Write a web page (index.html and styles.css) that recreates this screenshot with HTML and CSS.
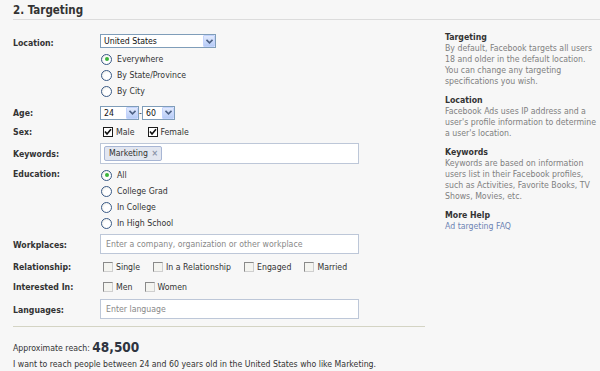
FILE: index.html
```html
<!DOCTYPE html>
<html lang="en">
<head>
    <meta charset="UTF-8">
    <title>Targeting</title>
    <link rel="stylesheet" href="styles.css">
</head>
<body>
    <div class="section">
        <h2 class="section-title">2. Targeting</h2>

        <div class="section-body">
            <div class="form">
                <div class="row row-location">
                    <div class="label">Location:</div>
                    <div class="field">
                        <div class="select select-country">
                            <span class="select-value">United States</span>
                            <span class="select-arrow"><svg width="7" height="5" viewBox="0 0 7 5"><path d="M0.5 0.8 L3.5 3.8 L6.5 0.8" fill="none" stroke="#4d6185" stroke-width="1.6"/></svg></span>
                        </div>
                        <div class="option"><span class="radio checked"></span>Everywhere</div>
                        <div class="option"><span class="radio"></span>By State/Province</div>
                        <div class="option"><span class="radio"></span>By City</div>
                    </div>
                </div>

                <div class="row row-age">
                    <div class="label">Age:</div>
                    <div class="field inline">
                        <div class="select select-age">
                            <span class="select-value">24</span>
                            <span class="select-arrow"><svg width="7" height="5" viewBox="0 0 7 5"><path d="M0.5 0.8 L3.5 3.8 L6.5 0.8" fill="none" stroke="#4d6185" stroke-width="1.6"/></svg></span>
                        </div>
                        <span class="dash">-</span>
                        <div class="select select-age">
                            <span class="select-value">60</span>
                            <span class="select-arrow"><svg width="7" height="5" viewBox="0 0 7 5"><path d="M0.5 0.8 L3.5 3.8 L6.5 0.8" fill="none" stroke="#4d6185" stroke-width="1.6"/></svg></span>
                        </div>
                    </div>
                </div>

                <div class="row row-sex">
                    <div class="label">Sex:</div>
                    <div class="field inline checks">
                        <span class="check-item"><span class="checkbox checked"><svg width="8" height="8" viewBox="0 0 8 8"><path d="M1 3.6 L3 6 L7 1.2" fill="none" stroke="#111" stroke-width="1.6"/></svg></span>Male</span>
                        <span class="check-item"><span class="checkbox checked"><svg width="8" height="8" viewBox="0 0 8 8"><path d="M1 3.6 L3 6 L7 1.2" fill="none" stroke="#111" stroke-width="1.6"/></svg></span>Female</span>
                    </div>
                </div>

                <div class="row row-keywords">
                    <div class="label">Keywords:</div>
                    <div class="field">
                        <div class="text-input token-input">
                            <span class="token">Marketing <span class="token-x">×</span></span>
                        </div>
                    </div>
                </div>

                <div class="row row-education">
                    <div class="label">Education:</div>
                    <div class="field">
                        <div class="option"><span class="radio checked"></span>All</div>
                        <div class="option"><span class="radio"></span>College Grad</div>
                        <div class="option"><span class="radio"></span>In College</div>
                        <div class="option"><span class="radio"></span>In High School</div>
                    </div>
                </div>

                <div class="row row-workplaces">
                    <div class="label">Workplaces:</div>
                    <div class="field">
                        <div class="text-input placeholder">Enter a company, organization or other workplace</div>
                    </div>
                </div>

                <div class="row row-relationship">
                    <div class="label">Relationship:</div>
                    <div class="field inline checks">
                        <span class="check-item"><span class="checkbox"></span>Single</span>
                        <span class="check-item"><span class="checkbox"></span>In a Relationship</span>
                        <span class="check-item"><span class="checkbox"></span>Engaged</span>
                        <span class="check-item"><span class="checkbox"></span>Married</span>
                    </div>
                </div>

                <div class="row row-interested">
                    <div class="label">Interested In:</div>
                    <div class="field inline checks">
                        <span class="check-item"><span class="checkbox"></span>Men</span>
                        <span class="check-item"><span class="checkbox"></span>Women</span>
                    </div>
                </div>

                <div class="row row-languages">
                    <div class="label">Languages:</div>
                    <div class="field">
                        <div class="text-input placeholder">Enter language</div>
                    </div>
                </div>

                <div class="reach">
                    <div class="reach-count">Approximate reach: <strong>48,500</strong></div>
                    <div class="reach-summary">I want to reach people between 24 and 60 years old in the United States who like Marketing.</div>
                </div>
            </div>

            <div class="help">
                <div class="help-block">
                    <h3>Targeting</h3>
                    <p>By default, Facebook targets all users<br>18 and older in the default location.<br>You can change any targeting<br>specifications you wish.</p>
                </div>
                <div class="help-block">
                    <h3>Location</h3>
                    <p>Facebook Ads uses IP address and a<br>user's profile information to determine<br>a user's location.</p>
                </div>
                <div class="help-block">
                    <h3>Keywords</h3>
                    <p>Keywords are based on information<br>users list in their Facebook profiles,<br>such as Activities, Favorite Books, TV<br>Shows, Movies, etc.</p>
                </div>
                <div class="help-block">
                    <h3>More Help</h3>
                    <p><a href="#">Ad targeting FAQ</a></p>
                </div>
            </div>
        </div>
    </div>
</body>
</html>
```

FILE: styles.css
```css
* {
    margin: 0;
    padding: 0;
    box-sizing: border-box;
}

body {
    background-color: #f7f7f7;
    color: #333;
    font-family: 'DejaVu Sans Condensed', 'Liberation Sans', sans-serif;
    font-size: 8.7px;
    width: 600px;
    height: 371px;
    overflow: hidden;
}

.section {
    padding-left: 13px;
}

.section-title {
    font-size: 11.5px;
    font-weight: bold;
    color: #333;
    height: 20px;
    line-height: 15px;
    padding-top: 3px;
    border-bottom: 1px solid #dcdcdc;
}

.section-body {
    display: flex;
}

/* left column: the form */

.form {
    width: 412px;
    padding-top: 14px;
}

.row {
    display: grid;
    grid-template-columns: 87px 1fr;
}

.label {
    font-weight: bold;
    color: #333;
    line-height: 14px;
}

.row-location .label { padding-top: 2px; }
.row-age { margin-top: 6px; }
.row-age .label { padding-top: 1px; }
.row-sex { margin-top: 4px; }
.row-keywords { margin-top: 3px; }
.row-keywords .label { padding-top: 4px; }
.row-education { margin-top: 3px; }
.row-workplaces { margin-top: 3px; }
.row-workplaces .label { padding-top: 4px; }
.row-relationship { margin-top: 5px; }
.row-interested { margin-top: 4px; }
.row-languages { margin-top: 4px; }
.row-languages .label { padding-top: 4px; }

.inline {
    display: flex;
    align-items: center;
}

.row-sex .label,
.row-relationship .label,
.row-interested .label {
    line-height: 16px;
}

/* selects */

.select {
    display: flex;
    align-items: center;
    height: 14px;
    background: #fff;
    border: 1px solid #7f9db9;
}

.select-country { width: 116px; }
.select-age { width: 39px; }
.select-age:last-child { width: 33px; }

.select-value {
    flex: 1;
    padding-left: 3px;
    line-height: 12px;
    color: #111;
}

.select-arrow {
    width: 12px;
    height: 12px;
    display: flex;
    align-items: center;
    justify-content: center;
    background: linear-gradient(to bottom, #e2eafd, #b6cbf6);
    border: 1px solid #c3d3fd;
    border-radius: 1px;
}

.dash {
    width: 3px;
    text-align: center;
    color: #333;
}

/* radios and checkboxes */

.option {
    display: flex;
    align-items: center;
    height: 16px;
}

.row-location .select + .option { margin-top: 3px; }

.radio {
    width: 11px;
    height: 11px;
    border-radius: 50%;
    border: 1px solid #3a5a86;
    background: radial-gradient(circle at 60% 60%, #fff 40%, #e4e4dc 100%);
    margin: 0 5px 0 1px;
    display: flex;
    align-items: center;
    justify-content: center;
}

.radio.checked::after {
    content: "";
    width: 4px;
    height: 4px;
    border-radius: 50%;
    background: #3cb43c;
}

.checks {
    height: 16px;
}

.check-item {
    display: flex;
    align-items: center;
    margin-right: 10px;
}

.row-interested .check-item { margin-right: 9px; }

.checkbox {
    width: 10px;
    height: 10px;
    margin: 0 3px 0 3px;
    background: #f4f4f0;
    border: 1px solid #8a8a8a;
    border-right-color: #cfcfcf;
    border-bottom-color: #cfcfcf;
    display: flex;
    align-items: center;
    justify-content: center;
}

.checkbox.checked {
    background: #fff;
    border: 1px solid #1c1c1c;
}

/* text inputs */

.text-input {
    width: 259px;
    height: 20px;
    background: #fff;
    border: 1px solid #bdc7d8;
    padding: 0 5px;
    line-height: 18px;
}

.placeholder {
    color: #888;
}

.token-input {
    height: 21px;
    padding: 2px 3px;
    display: flex;
    align-items: center;
}

.token {
    display: inline-block;
    height: 15px;
    line-height: 13px;
    padding: 0 3px 0 4px;
    background: #e2e6f0;
    border: 1px solid #a8b6d4;
    border-radius: 2px;
    color: #333;
}

.token-x {
    color: #8a94a8;
    font-weight: bold;
    margin-left: 1px;
}

/* reach summary */

.reach {
    margin-top: 7px;
    border-top: 1px solid #d4d4c4;
    padding-top: 13px;
}

.reach-count {
    color: #333;
    line-height: 14px;
}

.reach-count strong {
    font-size: 13.5px;
    color: #2e3440;
    vertical-align: -1px;
}

.reach-summary {
    margin-top: 4px;
    color: #333;
    line-height: 11px;
}

/* right column: help text */

.help {
    margin-left: 20px;
    padding-top: 12px;
    width: 155px;
}

.help-block {
    margin-bottom: 8px;
}

.help h3 {
    font-size: 8.7px;
    font-weight: bold;
    color: #333;
    line-height: 11px;
}

.help p {
    color: #808080;
    line-height: 11px;
}

.help a {
    color: #6d84b4;
    text-decoration: none;
}
```
